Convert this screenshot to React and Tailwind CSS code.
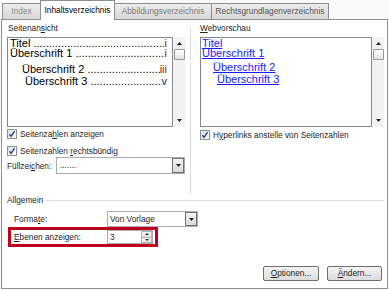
import React from "react";

const Check = () => (
  <svg width="10" height="10" viewBox="0 0 10 10" className="shrink-0">
    <defs>
      <linearGradient id="cbg" x1="0" y1="0" x2="1" y2="1">
        <stop offset="0" stopColor="#dcdcdc" />
        <stop offset="1" stopColor="#ffffff" />
      </linearGradient>
    </defs>
    <rect x="0.5" y="0.5" width="9" height="9" fill="url(#cbg)" stroke="#8e8f8f" />
    <path d="M2.4 5.2 L4.1 7.3 L7.6 2.2" fill="none" stroke="#21409a" strokeWidth="1.4" />
  </svg>
);

const Checkbox = ({ children, className = "" }) => (
  <div className={`flex items-center h-[10px] gap-[3px] ${className}`}>
    <Check />
    <span className="leading-[10px]">{children}</span>
  </div>
);

const Arrow = ({ up }) => (
  <svg width="5" height="3" viewBox="0 0 5 3">
    <path d={up ? "M0 3 L2.5 0 L5 3 Z" : "M0 0 L5 0 L2.5 3 Z"} fill="#222" />
  </svg>
);

const ScrollBar = () => (
  <div className="w-[12px] shrink-0 bg-[#f2f2f2] flex flex-col items-center">
    <div className="mt-[5px]">
      <Arrow up />
    </div>
    <div className="mt-[4px] w-[11px] h-[11px] rounded-[1px] border border-[#979797] bg-gradient-to-b from-white to-[#e2e2e2]" />
    <div className="flex-1" />
    <div className="mb-[5px]">
      <Arrow />
    </div>
  </div>
);

const DropButton = () => (
  <div className="w-[12px] shrink-0 self-stretch flex items-center justify-center border border-[#707070] bg-gradient-to-b from-[#f4f4f4] to-[#dadada]">
    <Arrow />
  </div>
);

const Leader = () => (
  <span className="w-0 flex-1 overflow-hidden whitespace-nowrap">
    ................................................................................
  </span>
);

const U = ({ children }) => <span className="underline">{children}</span>;

export default function App() {
  return (
    <div className="w-[389px] h-[290px] bg-[#fafafa] font-['Liberation_Sans',Arial,sans-serif] text-[8.3px] text-[#1e1e1e] overflow-hidden">
      {/* tabs */}
      <div className="h-[19px] flex items-end pl-[2px]">
        <div className="w-[39px] h-[16px] flex items-center justify-center border border-b-0 border-[#8e8f8f] bg-gradient-to-b from-[#ececec] to-[#d8d8d8] text-[#8a8a8a]">
          Index
        </div>
        <div className="relative z-10 -mb-px -ml-px w-[75px] h-[20px] flex items-center justify-center border border-b-0 border-[#8e8f8f] bg-white text-black">
          Inhaltsverzeichnis
        </div>
        <div className="-ml-px w-[98px] h-[16px] flex items-center justify-center border border-b-0 border-[#8e8f8f] bg-gradient-to-b from-[#ececec] to-[#d8d8d8] text-[#7a7a7a]">
          Abbildungsverzeichnis
        </div>
        <div className="-ml-px w-[118px] h-[16px] flex items-center justify-center border border-b-0 border-[#8e8f8f] bg-gradient-to-b from-[#ececec] to-[#d8d8d8] text-[#555]">
          Rechtsgrundlagenverzeichnis
        </div>
      </div>

      {/* panel */}
      <div className="ml-[1px] w-[387px] h-[270px] border border-[#8e8f8f] bg-white pl-[5px] flex flex-col">
        <div className="flex items-start">
          {/* left column */}
          <div className="w-[178px] shrink-0 pt-[3px] flex flex-col">
            <div className="leading-[10px] pl-px">
              Seitenan<U>s</U>icht
            </div>
            <div className="mt-[4px] h-[90px] flex">
              <div className="flex-1 min-w-0 overflow-hidden border border-[#828790] bg-white pl-[2px] pr-[5px] text-[11px] leading-[10px] text-black">
                <div className="flex">
                  <span>Titel&nbsp;</span>
                  <Leader />
                  <span className="text-[#8a1c1c]">i</span>
                </div>
                <div className="flex">
                  <span>Überschrift 1&nbsp;</span>
                  <Leader />
                  <span className="text-[#8a1c1c]">i</span>
                </div>
                <div className="flex mt-[6px] pl-[12px]">
                  <span>Überschrift 2&nbsp;</span>
                  <Leader />
                  <span className="text-[#8a1c1c]">iii</span>
                </div>
                <div className="flex mt-[2px] pl-[15px]">
                  <span>Überschrift 3&nbsp;</span>
                  <Leader />
                  <span className="text-[#1c2a7a]">v</span>
                </div>
              </div>
              <ScrollBar />
            </div>
            <Checkbox className="mt-[2px]">
              Seitenza<U>h</U>len anzeigen
            </Checkbox>
            <Checkbox className="mt-[7px]">
              Seitenzahlen <U>r</U>echtsbündig
            </Checkbox>
            <div className="mt-[1px] flex items-center">
              <span className="w-[49px] leading-[10px]">
                Füllzei<U>c</U>hen:
              </span>
              <div className="flex-1 h-[17px] flex border border-[#abadb3] bg-white">
                <span className="flex-1 pl-[3px] leading-[15px]">.......</span>
                <DropButton />
              </div>
            </div>
          </div>

          {/* separator */}
          <div className="ml-[5px] mt-[7px] w-px h-[167px] shrink-0 bg-[#dcdcdc]" />

          {/* right column */}
          <div className="ml-[9px] w-[184px] shrink-0 pt-[3px] flex flex-col">
            <div className="leading-[10px]">
              <U>W</U>ebvorschau
            </div>
            <div className="mt-[4px] h-[90px] flex">
              <div className="flex-1 min-w-0 border border-[#828790] bg-white pl-[1px] text-[11px] leading-[10px] text-[#1a1aff]">
                <div>
                  <U>Titel</U>
                </div>
                <div>
                  <U>Überschrift 1</U>
                </div>
                <div className="mt-[4px] pl-[11px]">
                  <U>Überschrift 2</U>
                </div>
                <div className="mt-[2px] pl-[15px]">
                  <U>Überschrift 3</U>
                </div>
              </div>
              <ScrollBar />
            </div>
            <Checkbox className="mt-[3px]">
              H<U>y</U>perlinks anstelle von Seitenzahlen
            </Checkbox>
          </div>
        </div>

        {/* Allgemein */}
        <div className="mt-[1px] h-[10px] flex items-center">
          <span className="leading-[10px]">Allgemein</span>
          <div className="ml-[3px] mr-[3px] flex-1 h-px bg-[#d5dfe5]" />
        </div>
        <div className="mt-[6px] pl-[7px] flex items-center h-[16px]">
          <span className="w-[93px]">
            Forma<U>t</U>e:
          </span>
          <div className="w-[91px] h-[16px] flex border border-[#abadb3] bg-white">
            <span className="flex-1 pl-[2px] leading-[14px]">Von Vorlage</span>
            <DropButton />
          </div>
        </div>
        <div className="ml-[1px] w-[150px] h-[20px] border-[3px] border-[#c0001c] flex items-center pl-[3px]">
          <span className="w-[93px]">
            <U>E</U>benen anzeigen:
          </span>
          <div className="w-[46px] h-[14px] flex border border-[#abadb3] bg-white">
            <span className="flex-1 pl-[2px] leading-[12px]">3</span>
            <div className="w-[11px] flex flex-col">
              <div className="flex-1 flex items-center justify-center border border-[#b4b4b4] bg-gradient-to-b from-[#f6f6f6] to-[#e0e0e0]">
                <svg width="4" height="2" viewBox="0 0 4 2">
                  <path d="M0 2 L2 0 L4 2 Z" fill="#333" />
                </svg>
              </div>
              <div className="flex-1 flex items-center justify-center border border-t-0 border-[#b4b4b4] bg-gradient-to-b from-[#f6f6f6] to-[#e0e0e0]">
                <svg width="4" height="2" viewBox="0 0 4 2">
                  <path d="M0 0 L4 0 L2 2 Z" fill="#333" />
                </svg>
              </div>
            </div>
          </div>
        </div>

        {/* buttons */}
        <div className="mt-[19px] flex justify-end gap-[8px] pr-[5px]">
          <div className="w-[56px] h-[15px] flex items-center justify-center rounded-[2px] border border-[#707070] bg-gradient-to-b from-[#f3f3f3] to-[#dcdcdc]">
            <span>
              <U>O</U>ptionen...
            </span>
          </div>
          <div className="w-[55px] h-[15px] flex items-center justify-center rounded-[2px] border border-[#707070] bg-gradient-to-b from-[#f3f3f3] to-[#dcdcdc]">
            <span>
              <U>Ä</U>ndern...
            </span>
          </div>
        </div>
      </div>
    </div>
  );
}
